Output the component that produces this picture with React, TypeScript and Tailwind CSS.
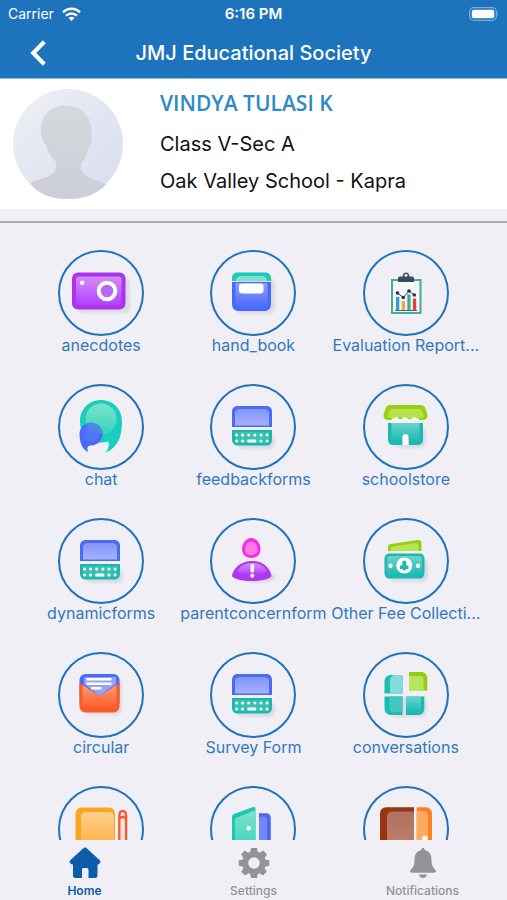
import type { ReactNode } from "react";
import { clsx } from "clsx";

const Gradients = () => (
  <svg className="absolute size-0" aria-hidden="true">
    <defs>
      <linearGradient id="purple" x1="0" y1="0" x2="0" y2="1">
        <stop offset="0" stopColor="#d58bfc" />
        <stop offset="1" stopColor="#b040fa" />
      </linearGradient>
      <linearGradient id="blue" x1="0" y1="0" x2="0" y2="1">
        <stop offset="0" stopColor="#8ea0fb" />
        <stop offset="1" stopColor="#4a6afa" />
      </linearGradient>
      <linearGradient id="screen" x1="0" y1="0" x2="0" y2="1">
        <stop offset="0" stopColor="#8295fa" />
        <stop offset="1" stopColor="#a5b1fb" />
      </linearGradient>
      <linearGradient id="teal" x1="0" y1="0" x2="0" y2="1">
        <stop offset="0" stopColor="#6bd3cf" />
        <stop offset="1" stopColor="#1bb9b0" />
      </linearGradient>
      <linearGradient id="mint" x1="0" y1="0" x2="0" y2="1">
        <stop offset="0" stopColor="#7ce2cc" />
        <stop offset="1" stopColor="#36d3bd" />
      </linearGradient>
      <linearGradient id="orange" x1="0" y1="0" x2="0" y2="1">
        <stop offset="0" stopColor="#ff9b74" />
        <stop offset="1" stopColor="#fc5a25" />
      </linearGradient>
      <linearGradient id="amber" x1="0" y1="0" x2="0" y2="1">
        <stop offset="0" stopColor="#ffd08a" />
        <stop offset="1" stopColor="#fdac3a" />
      </linearGradient>
      <linearGradient id="brown" x1="0" y1="0" x2="0" y2="1">
        <stop offset="0" stopColor="#b0705e" />
        <stop offset="1" stopColor="#bf8270" />
      </linearGradient>
      <filter id="soft" x="-20%" y="-20%" width="140%" height="140%">
        <feGaussianBlur stdDeviation="1" />
      </filter>
    </defs>
  </svg>
);

const Shadow = ({ x, y, w, h }: { x: number; y: number; w: number; h: number }) => (
  <rect x={x} y={y} width={w} height={h} rx="6" fill="#dcdbe4" filter="url(#soft)" />
);

const CameraIcon = () => (
  <>
    <Shadow x={19} y={27} w={53} h={36} />
    <rect x="14" y="22.5" width="53.5" height="37" rx="6" fill="#ab33ee" />
    <rect x="18" y="26.5" width="45.5" height="29" rx="3" fill="url(#purple)" />
    <circle cx="49" cy="41" r="8.3" fill="#b867f4" stroke="#fff" strokeWidth="4" />
    <circle cx="24.2" cy="32.8" r="2.2" fill="#fff" />
  </>
);

const BookIcon = () => (
  <>
    <Shadow x={26} y={28} w={39} h={36} />
    <path d="M22 31V28C22 24.500 24.500 22.500 28 22.500H55C58.500 22.500 61 24.500 61 28V31Z" fill="#17cbbd" />
    <path d="M26 31C26 27.500 28 26 31 26H52C55 26 57 27.500 57 31Z" fill="#7fe0d2" />
    <path d="M22 32H61V54C61 58.500 58.500 61 54 61H29C24.500 61 22 58.500 22 54Z" fill="#4769fb" />
    <path d="M25.500 33H57.500V53C57.500 56 56 57.500 53 57.500H30C27 57.500 25.500 56 25.500 53Z" fill="url(#blue)" />
    <rect x="29" y="33.500" width="24.500" height="10" rx="3" fill="#fff" />
  </>
);

const ReportIcon = () => (
  <>
    <rect x="29" y="30" width="28.500" height="33" fill="#f6f7fa" stroke="#48a995" strokeWidth="2" />
    <path d="M35 32V28Q35 26.500 37 26.500H39.500Q40 22.500 43 22.500T46.500 26.500H49Q51 26.500 51 28V32Z" fill="#384b5f" />
    <circle cx="43" cy="25.300" r="1.500" fill="#f0f0f6" />
    <path d="M33 47H36.300V60H33Z" fill="#329bd8" />
    <path d="M38.700 51H42V60H38.700Z" fill="#f1a92e" />
    <path d="M44.300 44.500H47.600V60H44.300Z" fill="#46aa91" />
    <path d="M49.900 48.500H53.200V60H49.900Z" fill="#dc4440" />
    <path d="M32 60.500H54" stroke="#55606c" strokeWidth="1" />
    <path d="M34.500 43L40.300 47.500L46 41L51.300 45" fill="none" stroke="#34414e" strokeWidth="1" />
    <g fill="#26313d">
      <circle cx="34.500" cy="43" r="1.800" />
      <circle cx="40.300" cy="47.500" r="1.800" />
      <circle cx="46" cy="41" r="1.800" />
      <circle cx="51.300" cy="45" r="1.800" />
    </g>
  </>
);

const ChatIcon = () => (
  <>
    <path d="M43 16C55 16 64 25 64 37.500C64 53 60 63 48 68.500C50 65 51.500 61 50.500 57.500C44 58.500 37 60 33 58C26 54 22 46 22 37.500C22 25 31 16 43 16Z" fill="#18cfbf" />
    <circle cx="43" cy="35" r="15.500" fill="url(#mint)" />
    <path d="M33 38.800C39.500 38.800 44.500 44 44.500 50C44.500 56 39.500 61.500 33 61.500C30 61.500 28.500 63 30 68C23 65 21.500 56 21.500 50C21.500 44 26.500 38.800 33 38.800Z" fill="#4869fa" />
    <path d="M27.500 40.500C33 36.500 43.500 40 44.500 49.500C38 51.500 31 49 27.500 40.500Z" fill="#438fe3" />
    <circle cx="33" cy="50" r="8" fill="#5578f2" opacity=".7" />
  </>
);

const KeyboardIcon = () => (
  <>
    <Shadow x={27} y={50} w={38} h={15} />
    <path d="M22 43V28C22 24 24.500 22 28 22H56C59.500 22 62 24 62 28V43Z" fill="#496bf5" />
    <path d="M25 41.500V30C25 26.500 27 25 30 25H54C57 25 59 26.500 59 30V41.500Z" fill="url(#screen)" />
    <path d="M22 46H62V55.500C62 59.500 59.500 61.500 56 61.500H28C24.500 61.500 22 59.500 22 55.500Z" fill="#1bb9ad" />
    <path d="M25 48H59V55C59 58 57.500 59 55 59H29C26.500 59 25 58 25 55Z" fill="#38c1b1" />
    <g fill="#fff">
      {[26.5, 32.6, 38.7, 44.9, 51, 57.1].map((cx) => (
        <circle key={cx} cx={cx} cy="51" r="1.500" />
      ))}
      {[26.5, 32.6, 51, 57.1].map((cx) => (
        <circle key={cx} cx={cx} cy="57" r="1.500" />
      ))}
      <rect x="37.300" y="55.500" width="9" height="3" rx="1" />
    </g>
  </>
);

const StoreIcon = () => (
  <>
    <Shadow x={30} y={43} w={33} h={21} />
    <path d="M27 21H58C60 21 61.300 22 62 23.500L64.300 30C65.300 33.500 63 36 60 36H25C22 36 19.700 33.500 20.700 30L23 23.500C23.700 22 25 21 27 21Z" fill="#99cf12" />
    <path d="M27.500 25H57.500L60.500 31C61 33 60 34 58.500 34H26.500C25 34 24 33 24.500 31Z" fill="#b6e14d" />
    <path d="M28 36.500Q29 33 31 34.500Q33 31.500 35.500 34.500Q37.500 36 39.500 34.500Q42 31.500 44.500 34.500Q46.500 36 48.500 34.500Q51.500 31.500 53.500 34.500Q55.500 33.500 57 36.500Z" fill="#f6f8f5" />
    <path d="M25 39H60V55C60 59 58 61 54.500 61H45.500V53C45.500 49 39.500 49 39.500 53V61H30.500C27 61 25 59 25 55Z" fill="#1eb8b0" />
    <path d="M28.500 39H56.500V54C56.500 56.500 55.500 57.500 53.500 57.500H45.500V53C45.500 49 39.500 49 39.500 53V57.500H31.500C29.500 57.500 28.500 56.500 28.500 54Z" fill="url(#teal)" />
    <path d="M39.500 61V53C39.500 49 45.500 49 45.500 53V61Z" fill="#f6f8fa" />
  </>
);

const ParentIcon = () => (
  <>
    <ellipse cx="47" cy="59" rx="18" ry="6" fill="#dad9e3" filter="url(#soft)" />
    <path d="M41.300 20C47 20 50.500 26 50.500 31C50.500 36.500 47 40 41.300 40C35.600 40 32 36.500 32 31C32 26 35.600 20 41.300 20Z" fill="#f82fe0" />
    <path d="M41.300 23.500C45 23.500 47.500 28 47.500 31.500C47.500 35 45 37 41.300 37C37.600 37 35 35 35 31.500C35 28 37.600 23.500 41.300 23.500Z" fill="#fd7be9" />
    <path d="M42 43C53 43 59.500 49.500 61.500 57.500C62 59.500 55 63 42 63C29 63 21.500 59.500 22 57.500C24 49.500 31 43 42 43Z" fill="#ad38ef" />
    <path d="M42 45C49 45 54 48 57 53C53 58 31 58 27 53C30 48 35 45 42 45Z" fill="url(#purple)" />
    <rect x="40.500" y="46" width="3.600" height="8.500" rx="1.500" fill="#fff" />
    <circle cx="42.300" cy="57.800" r="2" fill="#fff" />
  </>
);

const MoneyIcon = () => (
  <>
    <Shadow x={26} y={40} w={39} h={24} />
    <path d="M25 33V29C25 27 26 26.300 28 26L54 22C57 21.500 58.500 23 58.500 25.500V33Z" fill="#98cd16" />
    <path d="M28 33V29L53 25Q55.500 24.700 55.500 27V33Z" fill="#b9e34f" />
    <path d="M27 35.500H56C59.500 35.500 61.500 37.500 61.500 41V55C61.500 58.500 59.500 60.500 56 60.500H27C23.500 60.500 21.500 58.500 21.500 55V41C21.500 37.500 23.500 35.500 27 35.500Z" fill="#1eb8b3" />
    <rect x="24" y="38" width="35" height="20" rx="3" fill="url(#teal)" />
    <circle cx="41.300" cy="47.500" r="8" fill="#fff" />
    <path d="M39.300 44.500Q39.300 42.500 41.300 42.500T43.300 44.500V47.500H45.500V51H43.300L41.300 53L39.300 51H37V47.500H39.300Z" fill="#24b7b2" />
    <circle cx="27.500" cy="47.800" r="2.200" fill="#fff" />
    <circle cx="55" cy="47.800" r="2.200" fill="#fff" />
  </>
);

const CircularIcon = () => (
  <>
    <Shadow x={26} y={27} w={38} h={36} />
    <rect x="21.500" y="22" width="40" height="34" rx="6" fill="#4a6cf7" />
    <path d="M26 32L41.500 44L58 32V25H26Z" fill="#93a3fb" />
    <path d="M21.500 31L41.500 44L61.500 31V54C61.500 58 59 60.500 55 60.500H28C24 60.500 21.500 58 21.500 54Z" fill="#fc5b24" />
    <path d="M24.500 33L41.500 44L58.500 33V53C58.500 56 57 57.500 54 57.500H29C26 57.500 24.500 56 24.500 53Z" fill="url(#orange)" />
    <path d="M28.500 27.300H53.500M28.500 31.800H53.500M33 36.300H43.500" stroke="#fff" strokeWidth="2.500" />
  </>
);

const TilesIcon = () => (
  <>
    <Shadow x={27} y={45} w={37} h={20} />
    <path d="M39.500 41.500H21.500V30C21.500 25.500 24 23 28.500 23H39.500Z" fill="#20bcb6" />
    <path d="M39.500 41.500H27V29C27 26 28.500 23 32 23H39.500Z" fill="#82dcd9" />
    <path d="M46 38.500V20H57.500C62 20 64.300 22.500 64.300 27V38.500Z" fill="#98ca14" />
    <path d="M46 38.500V24H57C59.500 24 60.500 25 60.500 27.500V38.500Z" fill="#b6e45c" />
    <path d="M21.500 44.500H39.500V63H28.500C24 63 21.500 60.500 21.500 56Z" fill="#1cbab3" />
    <path d="M26.500 44.500H39.500V60H31C28 60 26.500 58.500 26.500 55.500Z" fill="#42c8c1" />
    <path d="M43 44.500H61.300V56C61.300 60.500 59 63 54.500 63H43Z" fill="#1fb8b0" />
    <path d="M43 44.500H58V55.500C58 58.500 56.500 60 53.500 60H43Z" fill="url(#teal)" />
  </>
);

const NotebookIcon = () => (
  <>
    <rect x="17.500" y="21.500" width="39.500" height="44" rx="6" fill="#fba524" />
    <path d="M23 65V31Q23 26 28 26H51Q56 26 56 31V65Z" fill="url(#amber)" />
    <path d="M61.300 65V30Q61.300 25 64.700 25T68.100 30V65M61.300 32.500Q64.700 29.500 68.100 32.500" fill="#ffe3d8" stroke="#f55c33" strokeWidth="2.400" />
  </>
);

const DoorIcon = () => (
  <>
    <path d="M22 65V31C22 29.500 22.500 28.800 24 28L42.500 21.300C44.500 20.500 45.500 21.500 45.500 23V65Z" fill="#1bc8b0" />
    <path d="M25 65V32.500L43 25Q45.500 24 45.500 26.500V65Z" fill="url(#mint)" />
    <circle cx="38.700" cy="42.300" r="2.200" fill="#fff" />
    <path d="M49 27.300H56C59 27.300 60.800 29 60.800 32V65H49Z" fill="#4967f4" />
    <path d="M49 33Q49 30.500 52 30.500H54Q57 30.500 57 34V65H49Z" fill="#7189f8" />
  </>
);

const WalletIcon = () => (
  <>
    <path d="M51 65H17V28C17 23.500 19.500 21.300 24 21.300H51Z" fill="#96350f" />
    <path d="M51 65H24V31Q24 25.500 30 25.500H51Z" fill="url(#brown)" />
    <path d="M53.700 21.300H62C66.500 21.300 69 23.500 69 28V65H53.700Z" fill="#fb8124" />
    <path d="M53.700 25H60Q65 25 65 30V65H53.700Z" fill="#ffaa60" />
    <circle cx="62" cy="52.500" r="2.800" fill="#fff" />
  </>
);

const modules: { label?: string; icon: ReactNode }[] = [
  { label: "anecdotes", icon: <CameraIcon /> },
  { label: "hand_book", icon: <BookIcon /> },
  { label: "Evaluation Report...", icon: <ReportIcon /> },
  { label: "chat", icon: <ChatIcon /> },
  { label: "feedbackforms", icon: <KeyboardIcon /> },
  { label: "schoolstore", icon: <StoreIcon /> },
  { label: "dynamicforms", icon: <KeyboardIcon /> },
  { label: "parentconcernform", icon: <ParentIcon /> },
  { label: "Other Fee Collecti...", icon: <MoneyIcon /> },
  { label: "circular", icon: <CircularIcon /> },
  { label: "Survey Form", icon: <KeyboardIcon /> },
  { label: "conversations", icon: <TilesIcon /> },
  { icon: <NotebookIcon /> },
  { icon: <DoorIcon /> },
  { icon: <WalletIcon /> },
];

const tabs: { label: string; icon: ReactNode }[] = [
  {
    label: "Home",
    icon: (
      <path d="M16 .5Q17 .5 18 1.400L31 13.500Q32 14.500 31 16T28.500 17.500V28.500Q28.500 31 26 31H19.500V22.500Q19.500 21 18 21H14.500Q13 21 13 22.500V31H6.500Q4 31 4 28.500V17.500Q2 17.500 1 16T1 13.500L14 1.400Q15 .5 16 .5Z" />
    ),
  },
  {
    label: "Settings",
    icon: (
      <path
        fillRule="evenodd"
        d="M13 1H19L19.700 4.800L22 5.800L25.200 3.600L29 7.600L26.700 10.700L27.500 12.700L31.300 13.300V18.700L27.500 19.400L26.600 21.500L28.800 24.700L24.900 28.600L21.700 26.300L19.700 27.100L19 31H13L12.300 27.100L10.300 26.300L7.100 28.600L3.200 24.700L5.400 21.500L4.500 19.400L.7 18.700V13.300L4.500 12.700L5.300 10.700L3 7.600L6.800 3.600L10 5.800L12.300 4.800ZM16 10.200A5.800 5.800 0 1 0 16 21.800A5.800 5.800 0 1 0 16 10.200Z"
      />
    ),
  },
  {
    label: "Notifications",
    icon: (
      <path d="M16 .8Q17.500 .8 17.500 3C22.500 4 24.500 8 24.500 12.500C24.500 18.500 26 20.500 28.500 23C29.500 24.500 28.500 25.800 27 25.800H5C3.500 25.800 2.500 24.500 3.500 23C6 20.500 7.500 18.500 7.500 12.500C7.500 8 9.500 4 14.500 3Q14.500 .8 16 .8ZM11.800 27.500H20.200Q19 31 16 31T11.800 27.500Z" />
    ),
  },
];

const Header = () => (
  <header className="shrink-0 border-b border-[#8bb9e0] bg-[#1d73bc] text-white">
    <div className="grid h-7 grid-cols-3 items-center px-2 text-sm">
      <div className="flex items-center gap-2">
        <span>Carrier</span>
        <svg width="19" height="15" viewBox="0 0 19 15" fill="none" stroke="currentColor" strokeWidth="2.400">
          <path d="M1 5.300C5.800.6 13.200.6 18 5.300M4 8.700C7.200 5.700 11.800 5.700 15 8.700" />
          <path d="M6.500 11Q9.500 8.700 12.500 11L9.500 14Z" fill="currentColor" stroke="none" />
        </svg>
      </div>
      <span className="text-center text-[15px] font-semibold">6:16 PM</span>
      <svg className="justify-self-end" width="30" height="14" viewBox="0 0 30 14">
        <rect x=".7" y=".7" width="26.600" height="12.600" rx="4" fill="none" stroke="#7cadd8" strokeWidth="1.300" />
        <rect x="2.800" y="2.800" width="22.400" height="8.400" rx="2" fill="#fff" />
        <path d="M28.500 4.500Q30 7 28.500 9.500Z" fill="#7cadd8" />
      </svg>
    </div>
    <div className="grid h-[50px] grid-cols-[76px_1fr_76px] items-center">
      <button type="button" aria-label="Back" className="flex h-full items-center justify-center">
        <svg width="16" height="26" viewBox="0 0 16 26" fill="none" stroke="currentColor" strokeWidth="4.200">
          <path d="M14.300 1.800L3.300 13L14.300 24.200" />
        </svg>
      </button>
      <h1 className="text-center text-xl font-medium">JMJ Educational Society</h1>
    </div>
  </header>
);

const Profile = () => (
  <section className="flex h-[130px] shrink-0 items-center bg-white pl-3">
    <svg className="shrink-0 rounded-full" width="112" height="112" viewBox="0 0 112 112">
      <defs>
        <linearGradient id="avatar" x1="0" y1="0" x2="1" y2="1">
          <stop offset="0" stopColor="#eff0f5" />
          <stop offset="1" stopColor="#d8dcee" />
        </linearGradient>
        <linearGradient id="person" x1="0" y1="0" x2="0" y2="1">
          <stop offset="0" stopColor="#d5d8dc" />
          <stop offset="1" stopColor="#cdcfd8" />
        </linearGradient>
      </defs>
      <circle cx="56" cy="56" r="55" fill="url(#avatar)" />
      <path
        d="M53 17.500C66 17 79 26 79.500 41C80 46 79 48 79.500 52C79.500 57 78.500 58 76.500 59.500C75.500 66 73 71 69 76C68 83 73 88 81 91C88 93.500 93 95 95 97C85 107 72 111 56 111C40 111 27 107 18 95.500C24 91 33 91 40 86C45 82 44.500 78 43.500 73C38 68 36 63 34 57C29 52 28.500 43 29 38C31 25 39 19.500 47 18.500C49 17 51 17.500 53 17.500Z"
        fill="url(#person)"
      />
    </svg>
    <div className="flex flex-col gap-[9px] pb-1 pl-9 text-xl text-[#111]">
      <h2 className="mb-1 font-['Open_Sans'] text-[21px] leading-7 font-semibold text-[#2b8ac9]">
        VINDYA TULASI K
      </h2>
      <p>Class V-Sec A</p>
      <p>Oak Valley School - Kapra</p>
    </div>
  </section>
);

export default function App() {
  return (
    <div className="flex h-dvh flex-col bg-[#f0eff5] font-['Inter',sans-serif]">
      <Gradients />
      <Header />
      <Profile />
      <div className="h-[14px] shrink-0 border-b-2 border-[#aaa9af]" />
      <main className="min-h-0 flex-1 overflow-hidden px-[25px] pt-[27px]">
        <div className="grid grid-cols-3 gap-y-6">
          {modules.map(({ label, icon }, i) => (
            <button key={i} type="button" className="flex h-[110px] flex-col items-center text-[#3279b9]">
              <span className="size-[86px] shrink-0 rounded-full border-2 border-[#1d73bc]">
                <svg className="-m-[2px] size-[86px]" viewBox="0 0 86 86">
                  {icon}
                </svg>
              </span>
              {label && <span className="whitespace-nowrap text-base leading-[18px]">{label}</span>}
            </button>
          ))}
        </div>
      </main>
      <nav className="grid h-[60px] shrink-0 grid-cols-3">
        {tabs.map(({ label, icon }, i) => (
          <button
            key={label}
            type="button"
            className={clsx(
              "flex flex-col items-center gap-1 pt-[7px] text-xs",
              i === 0 ? "font-semibold text-[#0d5cab]" : "font-medium text-[#929297]"
            )}
          >
            <svg width="32" height="32" viewBox="0 0 32 32" fill="currentColor">
              {icon}
            </svg>
            {label}
          </button>
        ))}
      </nav>
    </div>
  );
}
